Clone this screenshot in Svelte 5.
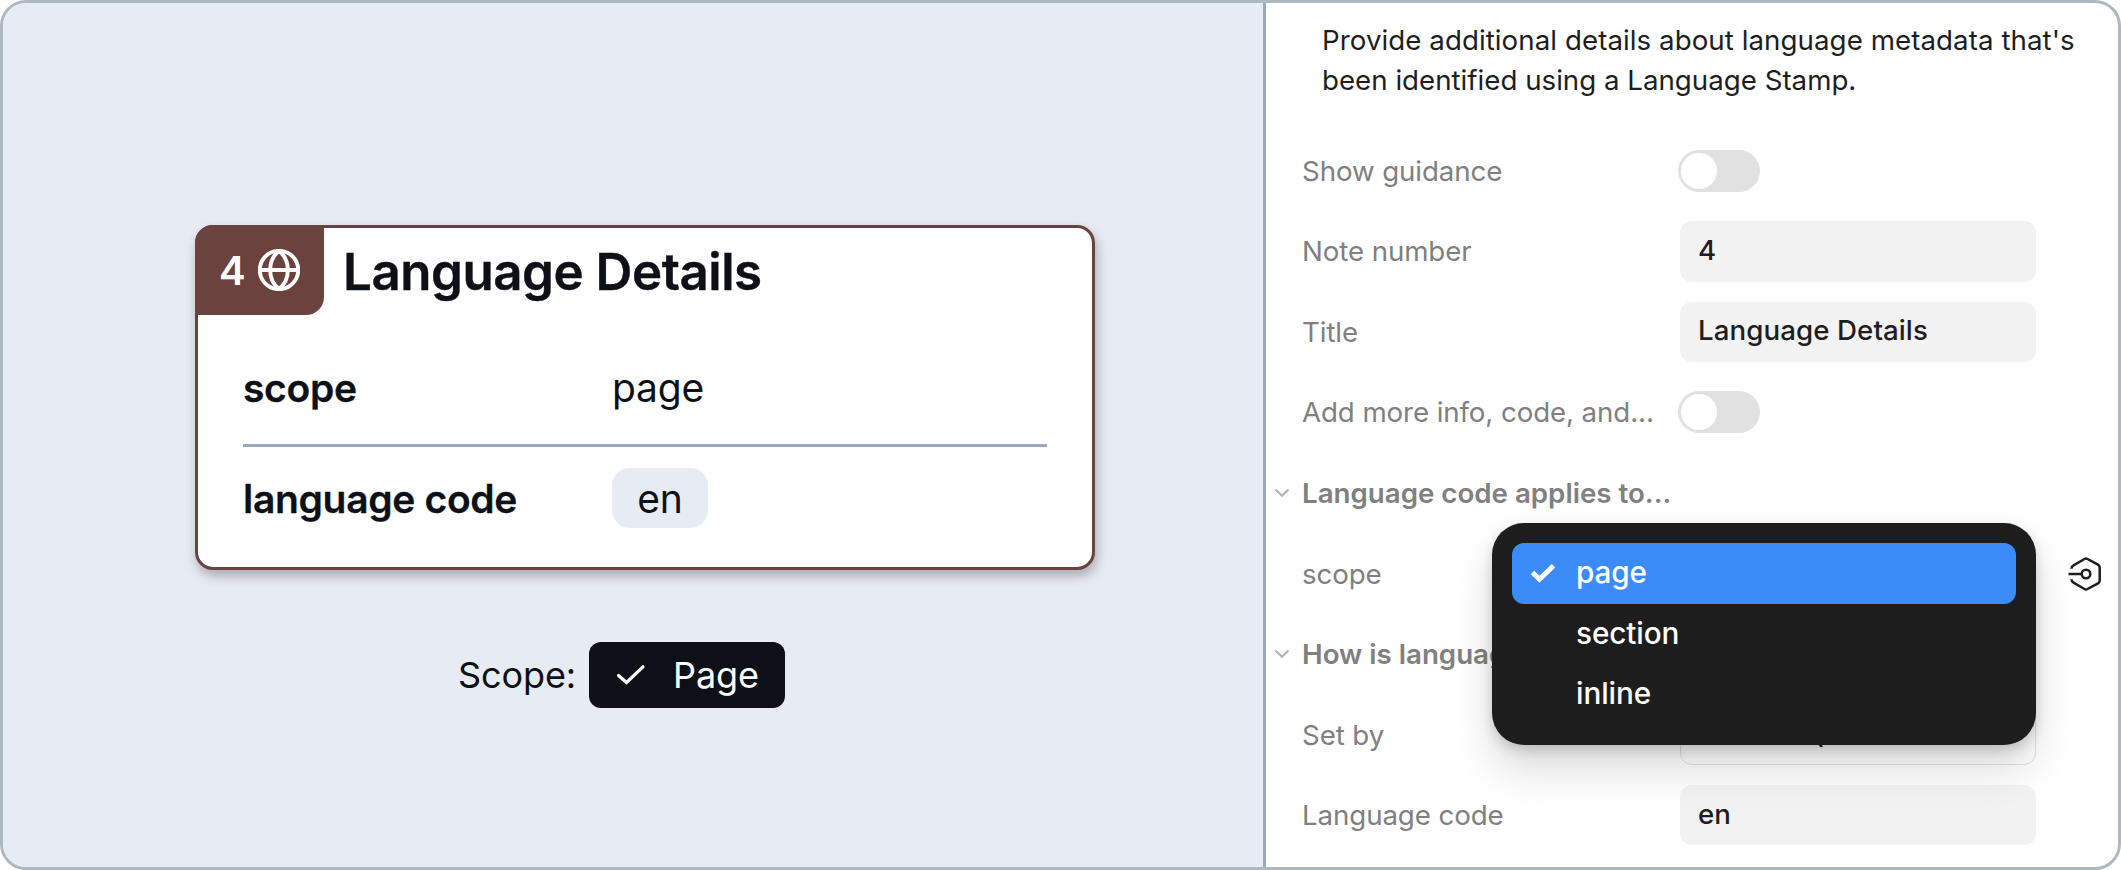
<script>
  const options = ['page', 'section', 'inline'];
  let selected = $state('page');
</script>

{#snippet toggle(label)}
  <button class="toggle" role="switch" aria-checked="false" aria-label={label}><span class="knob"></span></button>
{/snippet}

{#snippet chevron()}
  <svg class="chevron" viewBox="0 0 16 10" aria-hidden="true"><path d="M1.5 1.5 8 7.7 14.5 1.5" /></svg>
{/snippet}

<main class="frame">
  <section class="canvas">
    <article class="card">
      <header class="card-head">
        <div class="tab">
          <span class="num">4</span>
          <svg class="globe" viewBox="0 0 42 42" aria-hidden="true">
            <circle cx="21" cy="21" r="19.2" />
            <path d="M2 21H40M21 2C9.200 11 9.200 31 21 40M21 2C32.800 11 32.800 31 21 40" />
          </svg>
        </div>
        <h1>Language Details</h1>
      </header>
      <dl class="props">
        <div class="prop">
          <dt>scope</dt>
          <dd>page</dd>
        </div>
        <div class="prop">
          <dt>language code</dt>
          <dd><span class="chip">en</span></dd>
        </div>
      </dl>
    </article>
    <div class="scope-line">
      <span class="scope-label">Scope:</span>
      <span class="scope-pill">
        <svg class="pill-check" viewBox="0 0 30 22" aria-hidden="true"><path d="M2.500 11.500 10.500 18.500 27 2.800" /></svg>
        <span>Page</span>
      </span>
    </div>
  </section>

  <aside class="panel">
    <p class="desc">Provide additional details about language metadata that's<br /><span class="tight">been identified using a Language Stamp.</span></p>
    <div class="row"><span class="label">Show guidance</span>{@render toggle('Show guidance')}</div>
    <div class="row"><span class="label">Note number</span><div class="field"><span>4</span></div></div>
    <div class="row"><span class="label">Title</span><div class="field"><span>Language Details</span></div></div>
    <div class="row"><span class="label">Add more info, code, and...</span>{@render toggle('Add more info')}</div>
    <div class="row head">{@render chevron()}<span class="label">Language code applies to...</span></div>
    <div class="row">
      <span class="label">scope</span>
      <div class="slot"></div>
      <svg class="var-icon" viewBox="0 0 34 36" aria-hidden="true">
        <path d="M3.500 12.800Q3.500 10.500 5.500 9.400L16.500 3Q18 2.200 19.500 3L30 8.700Q31.700 9.700 31.700 11.500V24.500Q31.700 26.300 30 27.300L19.500 33Q18 33.800 16.500 33L5.500 26.600Q3.500 25.500 3.500 23.200" />
        <path d="M0.500 18H13.500" />
        <circle cx="18" cy="18" r="4.300" />
      </svg>
      <ul class="menu">
        {#each options as option}
          <li class:active={option === selected}>
            <svg class="menu-check" viewBox="0 0 26 20" aria-hidden="true"><path d="M2.500 9.500 9.500 16.300 23.500 2.700" /></svg>
            <span>{option}</span>
          </li>
        {/each}
      </ul>
    </div>
    <div class="row head">{@render chevron()}<span class="label">How is language set?</span></div>
    <div class="row"><span class="label">Set by</span><div class="field select"><span>Element (recomm...</span></div></div>
    <div class="row"><span class="label">Language code</span><div class="field"><span>en</span></div></div>
  </aside>
</main>

<style>
  :global(body) {
    margin: 0;
    background: #fff;
  }

  .frame {
    box-sizing: border-box;
    width: 2121px;
    height: 870px;
    display: flex;
    overflow: hidden;
    border: 3px solid #aeb8c1;
    border-radius: 26px;
    background: #fff;
    font-family: Inter, sans-serif;
    color: #0d1017;
  }

  .canvas {
    box-sizing: border-box;
    width: 1263px;
    flex: none;
    padding: 222px 0 0 192px;
    background: #e7ebf3;
    border-right: 3px solid #9ba8bd;
  }

  .card {
    box-sizing: border-box;
    width: 900px;
    height: 345px;
    border: 3px solid #6c423e;
    border-radius: 18px;
    background: #fff;
    box-shadow: 2px 6px 12px rgba(0, 0, 0, 0.27);
  }

  .card-head {
    display: flex;
    align-items: center;
    height: 87px;
  }

  .tab {
    box-sizing: border-box;
    display: flex;
    align-items: center;
    gap: 14px;
    width: 129px;
    height: 90px;
    margin: -3px 0 0 -3px;
    padding-left: 24px;
    border-radius: 18px 0 18px 0;
    background: #6c423e;
    color: #fff;
  }

  .num {
    width: 25px;
    margin-top: 1px;
    font-size: 40px;
    font-weight: 600;
    letter-spacing: -1px;
  }

  .globe {
    width: 42px;
    height: 42px;
    fill: none;
    stroke: #fff;
    stroke-width: 3.900;
  }

  h1 {
    margin: -1px 0 0 19px;
    font-size: 51px;
    font-weight: 600;
    letter-spacing: -0.45px;
    white-space: nowrap;
    -webkit-text-stroke: 0.4px currentColor;
  }

  .props {
    margin: 21px 45px 0;
    font-size: 39px;
  }

  .prop {
    box-sizing: border-box;
    display: flex;
    align-items: center;
    height: 108px;
    padding-bottom: 6px;
  }

  .prop:first-child {
    height: 111px;
    border-bottom: 3px solid #9ba8bd;
  }

  dt {
    width: 369px;
    font-weight: 600;
    letter-spacing: -0.32px;
    -webkit-text-stroke: 0.3px currentColor;
  }

  dd {
    margin: 0;
    letter-spacing: -0.2px;
  }

  .chip {
    display: flex;
    align-items: center;
    justify-content: center;
    width: 96px;
    height: 60px;
    border-radius: 18px;
    background: #e7ebf3;
  }

  .scope-line {
    display: flex;
    align-items: center;
    gap: 14px;
    margin: 72px 0 0 263px;
    font-size: 36px;
    letter-spacing: -0.1px;
  }

  .scope-label {
    width: 117px;
  }

  .scope-pill {
    box-sizing: border-box;
    display: flex;
    align-items: center;
    gap: 27px;
    width: 196px;
    height: 66px;
    padding-left: 27px;
    border-radius: 12px;
    background: #0d1017;
    color: #fff;
  }

  .pill-check {
    width: 30px;
    height: 22px;
    fill: none;
    stroke: #fff;
    stroke-width: 3.200;
    stroke-linecap: round;
  }

  .panel {
    flex: 1;
    min-width: 0;
    font-size: 27.700px;
    letter-spacing: -0.1px;
    color: #1e1e1e;
  }

  .desc {
    margin: 17px 0 30px 56px;
    line-height: 40.280px;
    letter-spacing: 0.06px;
    white-space: nowrap;
  }

  .tight {
    letter-spacing: 0;
  }

  .row {
    position: relative;
    display: flex;
    align-items: center;
    height: 80.560px;
    padding-left: 36px;
  }

  .label {
    width: 378px;
    color: #808080;
    white-space: nowrap;
  }

  .head {
    padding-left: 8px;
  }

  .head .label {
    font-weight: 600;
    letter-spacing: 0;
  }

  .chevron {
    width: 16px;
    height: 10px;
    margin-right: 12px;
    fill: none;
    stroke: #b3b3b3;
    stroke-width: 2.200;
  }

  .toggle {
    box-sizing: border-box;
    width: 82px;
    height: 42px;
    margin-left: -2px;
    padding: 3px;
    border: 0;
    border-radius: 21px;
    background: #e1e1e1;
  }

  .knob {
    display: block;
    width: 36px;
    height: 36px;
    border-radius: 50%;
    background: #fff;
  }

  .field {
    box-sizing: border-box;
    display: flex;
    align-items: center;
    width: 356px;
    height: 60.400px;
    padding: 0 0 3px 18px;
    border-radius: 12px;
    background: #f2f2f2;
    font-weight: 450;
    letter-spacing: 0.07px;
  }

  .select {
    border: 1.500px solid #e1e1e1;
    background: #fff;
  }

  .slot {
    width: 356px;
  }

  .var-icon {
    width: 34px;
    height: 36px;
    margin-left: 32px;
    fill: none;
    stroke: #1e1e1e;
    stroke-width: 2.500;
    stroke-linejoin: round;
  }

  .menu {
    position: absolute;
    top: -10px;
    left: 226px;
    z-index: 1;
    box-sizing: border-box;
    width: 544px;
    height: 222px;
    margin: 0;
    padding: 20px;
    border-radius: 32px;
    background: #1d1d1d;
    color: #fff;
    font-size: 29.700px;
    font-weight: 500;
    list-style: none;
    box-shadow: 0 25px 40px rgba(0, 0, 0, 0.14), 0 5px 13px rgba(0, 0, 0, 0.17);
  }

  .menu li {
    display: flex;
    align-items: center;
    gap: 20px;
    height: 60.500px;
    padding-left: 18px;
    border-radius: 12px;
  }

  .menu li span {
    margin-top: -3px;
  }

  .menu-check {
    width: 26px;
    height: 20px;
    margin-top: -2px;
    fill: none;
    stroke: none;
    stroke-width: 5;
  }

  .menu .active {
    background: #3b8cf8;
  }

  .active .menu-check {
    stroke: #fff;
  }
</style>
